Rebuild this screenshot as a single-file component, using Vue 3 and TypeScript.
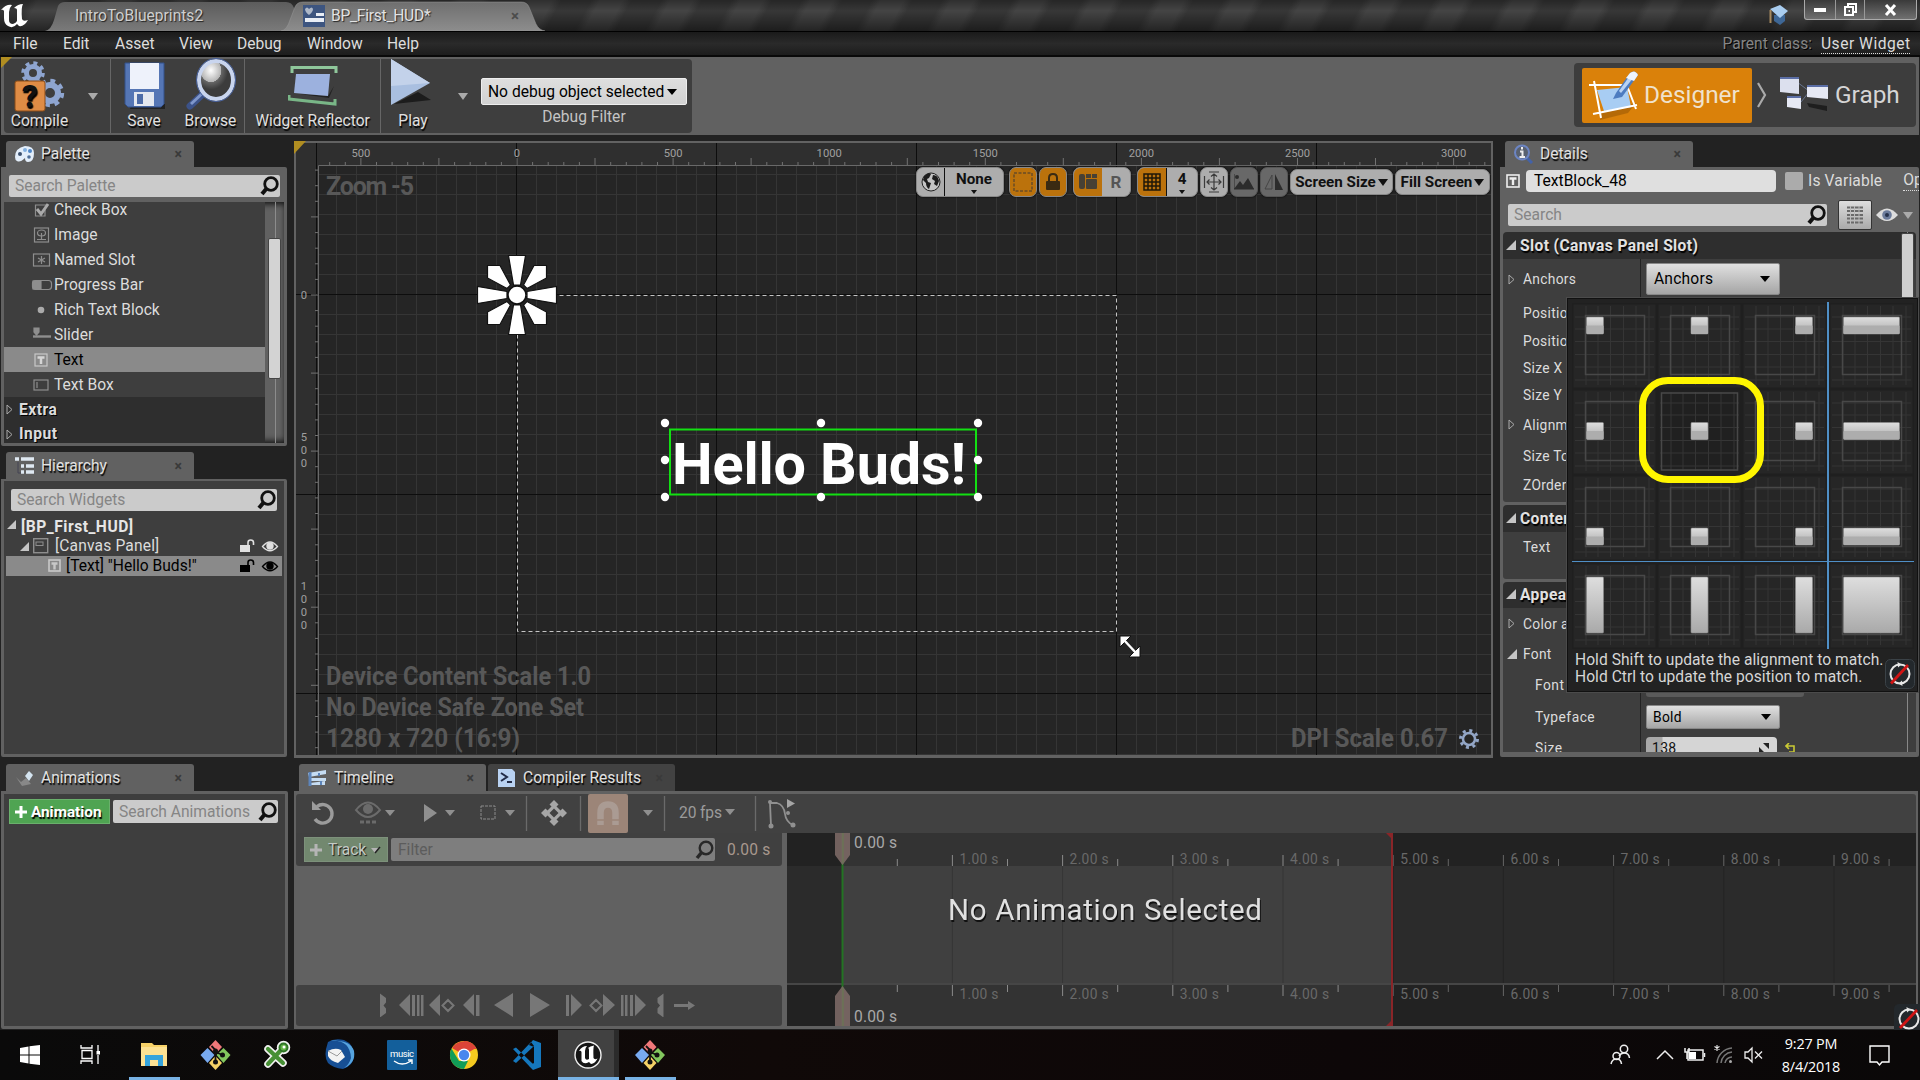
<script setup lang="ts">
interface PaletteItem { name: string; icon: string; selected?: boolean }
interface Tick { pos: number; len: number; label?: string }

const menus = [
  { name: 'File', w: 50 }, { name: 'Edit', w: 52 }, { name: 'Asset', w: 64 }, { name: 'View', w: 58 },
  { name: 'Debug', w: 70 }, { name: 'Window', w: 80 }, { name: 'Help', w: 60 },
]

const palette: PaletteItem[] = [
  { name: 'Check Box', icon: 'check' },
  { name: 'Image', icon: 'image' },
  { name: 'Named Slot', icon: 'slot' },
  { name: 'Progress Bar', icon: 'progress' },
  { name: 'Rich Text Block', icon: 'dot' },
  { name: 'Slider', icon: 'slider' },
  { name: 'Text', icon: 'text', selected: true },
  { name: 'Text Box', icon: 'textbox' },
]

const ruler = (from: number, to: number, origin: number): Tick[] => {
  const out: Tick[] = []
  for (let i = -30; i < 70; i++) {
    const pos = origin + i * 15.61
    if (pos < from || pos > to) continue
    const major = i % 10 === 0
    out.push({ pos, len: major ? 7 : i % 5 === 0 ? 7 : 3, label: major ? String(Math.abs(i * 50)) : undefined })
  }
  return out
}
const hTicks = ruler(320, 1491, 517)
const vTicks = ruler(168, 754, 295)

const gridX: number[] = []
for (let x = 337; x < 1492; x += 20) if ((x - 517) % 200 !== 0) gridX.push(x)
const gridY: number[] = []
for (let y = 174; y < 755; y += 20) if ((y - 294) % 200 !== 0) gridY.push(y)
const majorX = [317, 517, 717, 917, 1117, 1317]
const majorY = [294, 494, 693]

const handles = [
  [665, 423], [821, 423], [978, 423], [665, 460], [978, 460], [665, 497], [821, 497], [978, 497],
]
const petals = [0, 90, 180, 270]

const seconds = [1, 2, 3, 4, 5, 6, 7, 8, 9]
const halves = [0, 1, 2, 3, 4, 5, 6, 7, 8, 9]
const timeX = (s: number) => 55.2 + s * 110.2

interface Anchor { row: number; col: number; x: number; y: number; w: number; h: number; hover: boolean }
const starts = [14.5, 34, 53.5, 14.5]
const anchors: Anchor[] = []
for (let row = 0; row < 4; row++)
  for (let col = 0; col < 4; col++)
    anchors.push({
      row, col, x: starts[col], y: starts[row] - 0.5,
      w: col === 3 ? 56 : 17, h: row === 3 ? 56 : 17,
      hover: row === 1 && col === 1,
    })
const cellLines = [14, 26, 38.5, 51.5, 64, 77]

const props = [
  { label: 'Position X', h: 28 }, { label: 'Position Y', h: 27 }, { label: 'Size X', h: 28 },
  { label: 'Size Y', h: 26 }, { label: 'Alignment', h: 33, arrow: true }, { label: 'Size To Content', h: 29 },
  { label: 'ZOrder', h: 30 },
]
</script>

<template>
  <div class="screen">
    <header class="titlebar">
      <svg class="tabs" width="560" height="31" viewBox="0 0 560 31">
        <defs>
          <linearGradient id="t1" x2="0" y2="1"><stop offset="0" stop-color="#5c5c5c" /><stop offset="1" stop-color="#7a7a7a" /></linearGradient>
          <linearGradient id="t2" x2="0" y2="1"><stop offset="0" stop-color="#6f6f6f" /><stop offset="1" stop-color="#8d8d8d" /></linearGradient>
        </defs>
        <path d="M45 31Q51 30 54 20L58 6Q60 2 65 2H286Q292 2 294 8L300 31Z" fill="url(#t1)" />
        <path d="M281 31Q287 30 290 20L295 7Q297 2 303 2H521Q527 2 529 7L536 24Q539 30 545 31Z" fill="url(#t2)" stroke="#999" stroke-width=".5" />
        <g fill="#fff">
          <path d="M1 10Q6 4 12 5Q9 8 9 12V20Q9 24 13 24Q16 23 17 21V10Q17 8 14 8Q18 4 23 4Q21 7 22 19Q23 22 28 20Q24 27 19 26L17 24Q13 29 8 26Q4 24 4 18V11Q3 9 1 10Z" />
        </g>
        <rect x="303" y="5" width="22" height="22" fill="#3d5580" />
        <path d="M305 9q2-3 4 0q3-3 4 0q0 3-4 6q-4-3-4-6" fill="#aeb8c8" />
        <path d="M316 13h8v3h-8zM305 18h19v4h-19z" fill="#e8edf5" />
      </svg>
      <span class="tab-text one">IntroToBlueprints2</span>
      <span class="tab-text two">BP_First_HUD*</span>
      <span class="title-x">×</span>
      <div class="grow"></div>
      <svg class="cap" width="22" height="22" viewBox="0 0 22 22">
        <path d="M6 11v6l6 4 5-4v-6z" fill="#3e6796" /><path d="M2 5l10-4 8 6-8 7z" fill="#a9cdf0" /><path d="M2.500 6v13" stroke="#a68a60" stroke-width="2" />
      </svg>
      <div class="winbtns">
        <span class="wb w1"><svg width="14" height="5"><rect x="1" y="1" width="12" height="4" fill="#fff" /></svg></span>
        <span class="wb w2"><svg width="14" height="14" fill="none" stroke="#fff" stroke-width="2"><path d="M5 3V1h8v8h-2" /><rect x="2" y="4" width="8" height="8" /><path d="M5.500 8h1.500" /></svg></span>
        <span class="wb w3"><svg width="14" height="14" stroke="#fff" stroke-width="3"><path d="M2 2l9 10M11 2L2 12" /></svg></span>
      </div>
    </header>

    <nav class="menubar">
      <span v-for="m in menus" :key="m.name" class="menu" :style="{ width: m.w + 'px' }">{{ m.name }}</span>
      <div class="grow"></div>
      <span class="parent">Parent class:</span><span class="userwidget">User Widget</span>
    </nav>

    <section class="toolbar">
      <i class="corner"></i>
      <div class="tools">
        <div class="tool compile">
          <svg class="open" width="54" height="52" viewBox="0 0 54 52">
            <g fill="none" stroke="#8ea5d0"><circle cx="20" cy="14" r="6.500" stroke-width="5" /><circle cx="20" cy="14" r="9.800" stroke-width="4" stroke-dasharray="3.850 3.850" /><circle cx="37" cy="34" r="8" stroke-width="6" /><circle cx="37" cy="34" r="12.200" stroke-width="4" stroke-dasharray="4.790 4.790" /></g>
            <rect x="2" y="22" width="30" height="30" rx="2" fill="#df8c45" stroke="#8a4b16" />
            <text x="17" y="48" font-size="31" font-weight="900" text-anchor="middle" fill="#111">?</text>
          </svg>
          <span>Compile</span>
        </div>
        <i class="caret c1"></i>
        <div class="tool save">
          <svg width="44" height="50" viewBox="0 0 44 50">
            <path d="M10 45h33v5H8z" fill="#222" />
            <path d="M3 4H42V45L39 48H6L3 45Z" fill="#5576b5" stroke="#33508a" /><rect x="8" y="4" width="29" height="26" fill="#eef2fb" /><rect x="12" y="33" width="20" height="14" fill="#e4e8f0" /><rect x="15" y="35" width="6" height="10" fill="#4d6ca8" />
          </svg>
          <span>Save</span>
        </div>
        <div class="tool browse">
          <svg width="52" height="52" viewBox="0 0 52 52">
            <defs><radialGradient id="lens" cx=".35" cy=".25"><stop offset="0" stop-color="#fff" /><stop offset=".6" stop-color="#b5b5b5" /><stop offset=".62" stop-color="#666" /><stop offset="1" stop-color="#3c3c3c" /></radialGradient></defs>
            <path d="M20 34L5 48" stroke="#3c5288" stroke-width="7" stroke-linecap="round" /><path d="M20 33L6 46" stroke="#7f97cb" stroke-width="3" />
            <ellipse cx="31" cy="22" rx="17" ry="19" fill="url(#lens)" stroke="#c9d5ee" stroke-width="4" /><ellipse cx="31" cy="22" rx="19.500" ry="21.500" fill="none" stroke="#4a64a0" />
          </svg>
          <span>Browse</span>
        </div>
        <div class="tool reflector">
          <svg width="50" height="42" viewBox="0 0 50 42">
            <path d="M4 8V2.500H48V8" fill="none" stroke="#8fc79b" stroke-width="3" /><path d="M1 30V34L47 39V34" fill="none" stroke="#79b687" stroke-width="3" /><path d="M12 29l28 2 6-10-5 12z" fill="#222" /><path d="M8 9H42L40 31 6 28Z" fill="#9cb1de" />
          </svg>
          <span>Widget Reflector</span>
        </div>
        <div class="tool play">
          <svg width="44" height="50" viewBox="0 0 44 50"><path d="M6 46L43 42 30 34z" fill="#1c1c1c" /><path d="M3 1L42 25 3 47Z" fill="#a9bfe0" /><path d="M3 1L42 25 3 28Z" fill="#c3d2ea" /></svg>
          <span>Play</span>
        </div>
        <i class="caret c2"></i>
        <div class="debug">
          <div class="debugbox"><span>No debug object selected</span><i class="bcaret"></i></div>
          <span class="debuglabel">Debug Filter</span>
        </div>
      </div>
      <div class="grow"></div>
      <div class="modes">
        <div class="designer">
          <svg width="52" height="52" viewBox="0 0 52 52">
            <path d="M12 44l36-10-8 10-28 7z" fill="#9b5a05" opacity=".6" /><path d="M9 21L39 18 43 38 16 42Z" fill="#a8cdf3" /><path d="M1 16H40M6 12L13 49M5 45L49 36M38 14L48 40" stroke="#fff" stroke-width="2" fill="none" /><path d="M28 24L42 4Q47 0 50 6L34 28 25 30Z" fill="#4d7cc0" /><path d="M31 22L43 5 46 8 33 24z" fill="#b9d3f3" /><path d="M42 4Q47 0 50 6L46 12 38 9Z" fill="#eef4ff" />
          </svg>
          <span>Designer</span>
        </div>
        <svg class="chev" width="12" height="26"><path d="M2 1L9 13 2 25" fill="none" stroke="#aaa" stroke-width="2.200" /></svg>
        <svg width="50" height="36" viewBox="0 0 50 36">
          <path d="M18 5L30 14M22 25L30 15" stroke="#67748f" /><path d="M4 17l10 8M28 26l20 3v5l-18-4z" fill="#1e1e1e" />
          <path d="M1 0H20V17L1 15Z" fill="#dce0ee" /><path d="M28 8H49V22L28 20Z" fill="#e6e9f4" /><path d="M8 19H22V32L8 30Z" fill="#e6e9f4" />
          <path d="M1 0H20V2H1zM28 8H49V10H28zM8 19H22V21H8z" fill="#5b6ea6" />
        </svg>
        <span class="graph">Graph</span>
      </div>
    </section>

    <main class="main">
      <aside class="left">
        <div class="tab">
          <svg width="21" height="18" viewBox="0 0 21 18"><path d="M1 12Q1 3 11 1Q20 1 20 8Q20 17 14 17Q11 17 11 13Q6 18 3 16Q1 15 1 12Z" fill="#e3eefa" /><circle cx="6" cy="9" r="2" fill="#3b506e" /><circle cx="11" cy="5" r="2" fill="#85b1e0" /><circle cx="16" cy="6" r="2" fill="#4f86c6" /><circle cx="15" cy="12" r="1.800" fill="#4f6e98" /></svg>
          <span>Palette</span><b class="x">×</b>
        </div>
        <div class="panel palette">
          <div class="search"><span>Search Palette</span><svg class="mag" width="19" height="20" viewBox="0 0 19 20"><circle cx="11" cy="8" r="6.300" fill="none" stroke="#111" stroke-width="2.800" /><path d="M7 12L2 18" stroke="#111" stroke-width="4" /></svg></div>
          <div class="plist">
            <div class="rows">
              <div v-for="p in palette" :key="p.name" class="prow" :class="{ sel: p.selected }">
                <svg width="22" height="18" viewBox="0 0 22 18" fill="none" stroke="#8e8e8e" stroke-width="1.200">
                  <template v-if="p.icon === 'check'"><path d="M15 4H4.500V15H14V9" /><path d="M6 8l4 5 7-10" stroke-width="3" stroke="#aaa" /></template>
                  <template v-else-if="p.icon === 'image'"><rect x="3.500" y="2" width="14" height="14" /><ellipse cx="10.500" cy="7" rx="4" ry="3" /><path d="M10.500 7v6M6 13.500h9" /></template>
                  <template v-else-if="p.icon === 'slot'"><rect x="2.500" y="3" width="16" height="12" /><path d="M10.500 5v8M7 7l7 4M14 7l-7 4" /></template>
                  <template v-else-if="p.icon === 'progress'"><rect x="1.500" y="4.500" width="19" height="9" rx="3" /><rect x="2" y="5" width="8" height="8" fill="#8e8e8e" /></template>
                  <circle v-else-if="p.icon === 'dot'" cx="10" cy="9" r="3.300" fill="#aaa" stroke="none" />
                  <template v-else-if="p.icon === 'slider'"><path d="M2 10.500H20" stroke-width="2.400" /><path d="M3 2H8V6L5.500 9 3 6Z" fill="#8e8e8e" /></template>
                  <template v-else-if="p.icon === 'text'"><rect x="4" y="3" width="12" height="12" stroke="#c8c8c8" /><path d="M6.500 6.500h7M10 6v7" stroke="#d5d5d5" stroke-width="2.500" /></template>
                  <template v-else><rect x="3" y="4" width="14" height="10" /><path d="M6 6v6" /></template>
                </svg>
                <span>{{ p.name }}</span>
              </div>
              <div class="pcat"><svg width="8" height="11"><path d="M1 1V10L6 5.500Z" fill="none" stroke="#aaa" /></svg>Extra</div>
              <div class="pcat"><svg width="8" height="11"><path d="M1 1V10L6 5.500Z" fill="none" stroke="#aaa" /></svg>Input</div>
            </div>
            <div class="track"><i></i></div>
          </div>
        </div>
        <div class="tab h">
          <svg width="21" height="18" viewBox="0 0 21 18"><path d="M1 2h4M7 2h13M7 9h3M12 9h8M7 15h3M12 15h8" stroke="#dfe9f2" stroke-width="3.500" /><path d="M4 5v11h3" stroke="#445" fill="none" /></svg>
          <span>Hierarchy</span><b class="x">×</b>
        </div>
        <div class="panel hier">
          <div class="search"><span>Search Widgets</span><svg class="mag" width="19" height="20" viewBox="0 0 19 20"><circle cx="11" cy="8" r="6.300" fill="none" stroke="#111" stroke-width="2.800" /><path d="M7 12L2 18" stroke="#111" stroke-width="4" /></svg></div>
          <div class="hrow root"><i class="exp"></i><b>[BP_First_HUD]</b></div>
          <div class="hrow canvas"><i class="exp"></i>
            <svg class="hi" width="16" height="16" fill="none" stroke="#8e8e8e"><rect x=".7" y=".7" width="14" height="14" stroke-width="1.400" /><rect x="3" y="4" width="7" height="3.500" /></svg>
            <span>[Canvas Panel]</span>
            <div class="grow"></div>
            <svg width="40" height="14" viewBox="0 0 40 14" fill="#e0e0e0"><rect x="1" y="6" width="10" height="7" /><path d="M9 6V3.500Q9 1 11.700 1T14.500 3.500V6" fill="none" stroke="#e0e0e0" stroke-width="1.600" /><path d="M23.500 7.500Q31-1.500 38.500 7.500Q31 16 23.500 7.500Z" fill="none" stroke="#e0e0e0" stroke-width="1.300" /><circle cx="31" cy="7" r="3.700" /></svg>
          </div>
          <div class="hrow txt">
            <svg class="hi" width="14" height="14" fill="none" stroke="#c8c8c8"><rect x="1" y="1" width="11" height="11" stroke-width="1.600" /><path d="M3.500 4.500h6M6.500 4v6.500" stroke-width="2.400" /></svg>
            <span>[Text] "Hello Buds!"</span>
            <div class="grow"></div>
            <svg width="40" height="14" viewBox="0 0 40 14" fill="#000"><rect x="1" y="6" width="10" height="7" /><path d="M9 6V3.500Q9 1 11.700 1T14.500 3.500V6" fill="none" stroke="#000" stroke-width="1.600" /><path d="M23.500 7.500Q31-1.500 38.500 7.500Q31 16 23.500 7.500Z" fill="none" stroke="#000" stroke-width="1.300" /><circle cx="31" cy="7" r="3.700" /></svg>
          </div>
        </div>
      </aside>

      <section class="viewport">
        <svg width="1199" height="617" viewBox="294 141 1199 617">
          <rect x="294" y="141" width="1199" height="617" fill="#626262" />
          <rect x="296" y="143" width="1195" height="612" fill="#2f2f2f" />
          <rect x="318.500" y="165" width="1172.500" height="590" fill="#252525" />
          <g stroke="#353535"><path v-for="x in gridX" :key="x" :d="`M${x - 0.5} 166V755`" /><path v-for="y in gridY" :key="y" :d="`M319 ${y + 0.5}H1491`" /></g>
          <g stroke="#0d0d0d"><path v-for="x in majorX" :key="x" :d="`M${x - 0.5} 143V755`" /><path v-for="y in majorY" :key="y" :d="`M296 ${y + 0.5}H1491`" /></g>
          <path d="M318.500 755V165.500H1491" fill="none" stroke="#696969" />
          <g stroke="#727272">
            <path v-for="t in hTicks" :key="t.pos" :d="`M${t.pos.toFixed(1)} 165v${-t.len}`" />
            <path v-for="t in vTicks" :key="t.pos" :d="`M318 ${t.pos.toFixed(1)}h${-t.len}`" />
          </g>
          <g class="rl">
            <template v-for="t in hTicks" :key="t.pos"><text v-if="t.label" :x="t.pos" y="157">{{ t.label }}</text></template>
            <text x="304" y="299">0</text>
            <text x="304" y="441">5</text><text x="304" y="454">0</text><text x="304" y="467">0</text>
            <text x="304" y="590">1</text><text x="304" y="603">0</text><text x="304" y="616">0</text><text x="304" y="629">0</text>
          </g>
          <path d="M294 141h12L294 154z" fill="#b08d21" />
          <g class="info">
            <text x="326" y="194.500" textLength="88">Zoom -5</text>
            <text x="326" y="685" textLength="265" lengthAdjust="spacingAndGlyphs">Device Content Scale 1.0</text>
            <text x="326" y="716" textLength="258" lengthAdjust="spacingAndGlyphs">No Device Safe Zone Set</text>
            <text x="326" y="747" textLength="194" lengthAdjust="spacingAndGlyphs">1280 x 720 (16:9)</text>
            <text x="1291" y="747" textLength="157" lengthAdjust="spacingAndGlyphs">DPI Scale 0.67</text>
          </g>
          <path d="M517.500 295.500H1116.500V631.500H517.500Z" fill="none" stroke="#c4c4c4" stroke-dasharray="4 3" />
          <g transform="translate(517 295)" fill="#fff" stroke="#111" stroke-width="1.200">
            <g v-for="r in petals" :key="r" :transform="`rotate(${r})`">
              <path d="M-3.500-10L-8.500-39.500H8.500L3.500-10Z" /><path d="M6.500-10L17-29.500H29.500V-17L10-6.500Z" />
            </g>
            <circle r="9" stroke-width="1.500" />
          </g>
          <rect x="670" y="429.500" width="306" height="65" fill="none" stroke="#12e012" stroke-width="2" />
          <text class="hello" x="672" y="484" textLength="294">Hello Buds!</text>
          <circle v-for="(h, i) in handles" :key="i" :cx="h[0]" :cy="h[1]" r="4.200" fill="#fff" />
          <path d="M1120 636H1131L1120 647ZM1140 657H1129L1140 646Z" fill="#fff" stroke="#111" /><path d="M1123 639L1137 654" stroke="#fff" stroke-width="2.500" />
          <g transform="translate(1469 739)" fill="none" stroke="#93a6c6"><circle r="6" stroke-width="2.500" /><circle r="8.500" stroke-width="3" stroke-dasharray="3 3.680" /></g>
        </svg>

        <div class="vtools">
          <div class="vb pair">
            <span class="cell globe"><svg width="20" height="20" viewBox="0 0 20 20"><circle cx="10" cy="10" r="9" fill="#c4c4c4" stroke="#222" /><path d="M3 4q5-4 7-2l-2 4-2 1 1 3 3 1-2 6q-3-2-3-6L2 8zM12 3q5 0 6 6l-2 5-3-2 1-3-3-2z" fill="#1c1c1c" /></svg></span>
            <span class="cell none"><b>None</b><i></i></span>
          </div>
          <div class="vb on dash"><svg width="22" height="22"><rect x="2" y="2" width="18" height="18" fill="none" stroke="#7d551f" stroke-width="2" stroke-dasharray="3 1.500" /></svg></div>
          <div class="vb on lock"><svg width="16" height="20"><rect x="1" y="9" width="14" height="9" rx="1" fill="#3a2a12" /><path d="M4 10V6Q4 2 8 2T12 6V10" fill="none" stroke="#3a2a12" stroke-width="2" /></svg></div>
          <div class="vb pair flow">
            <span class="cell on"><svg width="18" height="18" fill="#474034"><rect x="0" y="1" width="6" height="15" rx="2" /><rect x="7" y="1" width="5" height="4" /><rect x="13" y="1" width="5" height="4" /><rect x="7" y="6" width="11" height="10" rx="1" /></svg></span>
            <span class="cell rr"><b>R</b></span>
          </div>
          <div class="vb pair gridb">
            <span class="cell on"><svg width="18" height="18" fill="none" stroke="#201808" stroke-width="1.500"><path d="M1 1H17V17H1ZM5 1V17M9 1V17M13 1V17M1 5H17M1 9H17M1 13H17" /></svg></span>
            <span class="cell none"><b>4</b><i></i></span>
          </div>
          <div class="vb"><svg width="22" height="22" fill="none" stroke="#3a3a3a" stroke-width="1.200"><path d="M6 1H16M6 21H16M1.500 5V17M20.500 5V17M4 11H18M11 3V19M8 5.500L11 3 14 5.500M8 16.500L11 19 14 16.500M6.500 8.500L4 11 6.500 13.500M15.500 8.500L18 11 15.500 13.500" /></svg></div>
          <div class="vb dim"><svg width="20" height="16" fill="#2c2c2c"><path d="M0 15L6 7 9 11 14 4 20 15Z" /><circle cx="3" cy="3" r="2" /><path d="M0 0V15H20" fill="none" stroke="#2c2c2c" /></svg></div>
          <div class="vb dim"><svg width="20" height="18"><path d="M8 2V16H1Z" fill="none" stroke="#444" /><path d="M11 1V17H19Z" fill="#2c2c2c" /></svg></div>
          <div class="vb wide w1"><b>Screen Size</b><i></i></div>
          <div class="vb wide w2"><b>Fill Screen</b><i></i></div>
        </div>
      </section>

      <aside class="right">
        <div class="tab">
          <svg width="21" height="20" viewBox="0 0 21 20"><path d="M13 13L19 19" stroke="#4362a8" stroke-width="3" /><circle cx="9" cy="8.500" r="7" fill="#59616f" stroke="#6c85c4" stroke-width="2" /><path d="M9 3v2.500M7 7.500h2.500V13M6.500 13h5.500" stroke="#eee" stroke-width="2" fill="none" /></svg>
          <span>Details</span><b class="x">×</b>
        </div>
        <div class="panel details">
          <div class="drow name">
            <svg width="14" height="14" fill="none" stroke="#eee"><rect x="1" y="1" width="12" height="12" stroke-width="1.600" /><path d="M3.500 4.500h7M7 4v7" stroke-width="2.400" /></svg>
            <div class="nameinput">TextBlock_48</div>
            <i class="check"></i><span class="isvar">Is Variable</span><span class="op">Op</span>
          </div>
          <div class="drow srch">
            <div class="search"><span>Search</span><svg class="mag" width="19" height="20" viewBox="0 0 19 20"><circle cx="11" cy="8" r="6.300" fill="none" stroke="#111" stroke-width="2.800" /><path d="M7 12L2 18" stroke="#111" stroke-width="4" /></svg></div>
            <div class="listbtn"><svg width="18" height="18" stroke="#6a6a6a" stroke-width="2"><path d="M1 1.500h3M5 1.500h12M1 5h3M5 5h12M1 9h3M5 9h12M1 12.500h3M5 12.500h12M1 16.500h3M5 16.500h12" /><path d="M4.500 0V18M8.500 0V18M13 0V18" stroke="#bbb" stroke-width="1" /></svg></div>
            <svg class="eye" width="22" height="14" viewBox="0 0 22 14"><path d="M0 7Q11-6 22 7Q11 19 0 7Z" fill="#ddd" /><circle cx="11" cy="7" r="4.800" fill="#6c7c9c" /><circle cx="11" cy="7" r="2" fill="#26324c" /></svg>
            <i class="caret"></i>
          </div>
          <div class="dbody">
            <div class="dhead"><i class="exp"></i>Slot (Canvas Panel Slot)</div>
            <div class="dprops slot">
              <div class="dp anch"><span class="arr"><svg width="8" height="11"><path d="M1 1V10L6 5.500Z" fill="none" stroke="#aaa" /></svg></span><label>Anchors</label><div class="combo big"><span>Anchors</span><i class="bcaret"></i></div></div>
              <div v-for="p in props" :key="p.label" class="dp" :style="{ height: p.h + 'px' }"><span class="arr"><svg v-if="p.arrow" width="8" height="11"><path d="M1 1V10L6 5.500Z" fill="none" stroke="#aaa" /></svg></span><label>{{ p.label }}</label></div>
            </div>
            <div class="dhead gap b"><i class="exp"></i>Content</div>
            <div class="dprops"><div class="dp content"><span class="arr"></span><label>Text</label></div></div>
            <div class="dhead gap a"><i class="exp"></i>Appearance</div>
            <div class="dprops last">
              <div class="dp r31"><span class="arr"><svg width="8" height="11"><path d="M1 1V10L6 5.500Z" fill="none" stroke="#aaa" /></svg></span><label>Color and Opacity</label></div>
              <div class="dp r30"><span class="arr"><i class="exp"></i></span><label>Font</label></div>
              <div class="dp r32 sub"><span class="arr"></span><label>Font</label><div class="famcombo"></div></div>
              <div class="dp r32 sub"><span class="arr"></span><label>Typeface</label><div class="combo"><span>Bold</span><i class="bcaret"></i></div></div>
              <div class="dp r29 sub"><span class="arr"></span><label>Size</label><div class="num"><span>138</span><svg width="12" height="12" fill="#222"><path d="M5 1h6v6zM1 5v6h6z" /></svg></div><svg class="reset" width="10" height="10" fill="none" stroke="#c9c934" stroke-width="1.600"><path d="M1 3H9V9H4M4 0L1 3 4 6" /></svg></div>
            </div>
            <div class="dscroll"><i></i></div>
          </div>
        </div>

        <div class="popup">
          <div class="agrid">
            <svg v-for="a in anchors" :key="`${a.row}-${a.col}`" width="85" height="86" viewBox="0 0 85 86">
              <rect width="85" height="86" fill="#1f1f1f" /><rect x="1.500" y="1.500" width="82" height="83" :fill="a.hover ? '#202020' : '#262626'" />
              <g stroke="#353535" stroke-width="1"><template v-for="l in cellLines" :key="l"><path :d="`M${l} 3V82M3 ${l}H82`" /></template></g>
              <rect v-if="a.hover" x="4.500" y="4" width="76" height="77" fill="none" stroke="#484848" stroke-width="1.500" />
              <rect v-else x="13.500" y="12.500" width="59" height="59" fill="none" stroke="#484848" stroke-width="1.500" />
              <rect :x="a.x" :y="a.y" :width="a.w" :height="a.h" rx="1" fill="url(#silver)" stroke="#8c8c8c" stroke-width=".6" />
              <rect v-if="a.h < 20" :x="a.x" :y="a.y + a.h / 2" :width="a.w" :height="a.h / 2" rx="1" fill="#adadad" />
            </svg>
          </div>
          <i class="vline"></i><i class="hline"></i><i class="yellow"></i>
          <p>Hold Shift to update the alignment to match.<br>Hold Ctrl to update the position to match.</p>
          <svg class="nosync" width="30" height="30" viewBox="0 0 30 30"><rect x=".5" y=".5" width="29" height="29" rx="5" fill="#23282c" stroke="#3b4247" /><circle cx="15" cy="15" r="9.500" fill="none" stroke="#e8e8e8" stroke-width="2" /><path d="M12.500 3l4 2.500-3.500 3zM17.500 27l-4-2.500 3.500-3z" fill="#e8e8e8" /><path d="M6 24.500L23 6" stroke="#d01414" stroke-width="2.800" /></svg>
        </div>
      </aside>
    </main>

    <section class="bottom">
      <aside class="anim">
        <div class="tab">
          <svg width="21" height="18" viewBox="0 0 21 18"><path d="M2 8L7 13 12 9 17 15 8 17Z" fill="#888" /><path d="M11 7L15 2 19 6 15 12Z" fill="#d4e4f0" /></svg>
          <span>Animations</span><b class="x">×</b>
        </div>
        <div class="panel apanel">
          <div class="green"><svg width="14" height="14"><path d="M7 1V13M1 7H13" stroke="#fff" stroke-width="3" /></svg>Animation</div>
          <div class="search"><span>Search Animations</span><svg class="mag" width="19" height="20" viewBox="0 0 19 20"><circle cx="11" cy="8" r="6.300" fill="none" stroke="#111" stroke-width="2.800" /><path d="M7 12L2 18" stroke="#111" stroke-width="4" /></svg></div>
        </div>
      </aside>

      <section class="timeline">
        <div class="ttabs">
          <div class="tab"><svg width="21" height="18" viewBox="0 0 21 18"><path d="M1 4L19 1V5L2 8ZM2 9H19V12H3ZM3 14L18 12V16H4Z" fill="#c5dcf2" /><path d="M3 3V17" stroke="#5d85bb" stroke-width="3" /><path d="M12 4V7M14 12V16" stroke="#5d85bb" stroke-width="2" /></svg><span>Timeline</span><b class="x">×</b></div>
          <div class="tab off"><svg width="21" height="20" viewBox="0 0 21 20"><path d="M2 1H16L19 4V19H2Z" fill="#b9d2f2" /><path d="M5 5L11 9 5 13M11 14H16" stroke="#222c48" stroke-width="2" fill="none" /></svg><span>Compiler Results</span><b class="x">×</b></div>
        </div>
        <div class="tpanel">
          <div class="ttools">
            <svg width="510" height="39" viewBox="296 794 510 39">
              <g fill="none" stroke="#8c8c8c">
                <path d="M317 806.500A9.300 9.300 0 1 1 315 819" stroke="#9b9b9b" stroke-width="3.400" /><path d="M312 801v9h9z" fill="#9b9b9b" stroke="none" />
                <path d="M356 810Q368 795 380 810Q368 824 356 810Z" stroke="#6b6b6b" stroke-width="2" /><circle cx="368" cy="809" r="5" fill="#6b6b6b" stroke="none" /><path d="M360 822h4M366 822h4M372 822h4" stroke="#6b6b6b" stroke-width="3" />
                <rect x="481" y="806" width="14" height="13" stroke-dasharray="3 1" />
              </g>
              <g fill="#8f8f8f"><path d="M385 810h10l-5 6zM445 810h10l-5 6zM505 810h10l-5 6zM643 810h10l-5 6zM725 809h10l-5 6zM424 804v18l13-9z" /></g>
              <path d="M554 800L567 813 554 826 541 813Z" fill="#a6a6a6" /><path d="M554 808.500L558.500 813 554 817.500 549.500 813ZM547.500 802.500L551.500 806.500 547.500 810.500 543.500 806.500ZM560.500 802.500L564.500 806.500 560.500 810.500 556.500 806.500ZM547.500 815.500L551.500 819.500 547.500 823.500 543.500 819.500ZM560.500 815.500L564.500 819.500 560.500 823.500 556.500 819.500Z" fill="#414141" />
              <path d="M526.500 796V831M580.500 796V831M664.500 796V831M755.500 796V831" stroke="#6a6a6a" stroke-width="1.300" />
              <rect x="588" y="794" width="40" height="39" rx="2" fill="#9c8578" />
              <path d="M600.500 825V813Q600.500 804.500 608 804.500T615.500 813V825" fill="none" stroke="#aa9b93" stroke-width="6.500" /><path d="M596 820h8M612 820h8" stroke="#9c8578" stroke-width="1.500" />
              <text x="679" y="818" textLength="43" font-size="15.600" fill="#9b9b9b">20 fps</text>
              <path d="M771 826L770 803 777 803Q784 805 785 814Q786 822 793 825" fill="none" stroke="#909090" stroke-width="1.800" /><path d="M787 799v9l8-4.500z" fill="#a5a5a5" /><g fill="#909090"><circle cx="771" cy="826" r="2.500" /><circle cx="770" cy="802" r="2" /><circle cx="788" cy="813" r="2" /><circle cx="793" cy="825" r="2.500" /></g>
            </svg>
          </div>
          <div class="tbody">
            <div class="tleft">
              <div class="trow">
                <div class="trackbtn"><svg width="14" height="14"><path d="M7 1V13M1 7H13" stroke="#b5b5b5" stroke-width="3" /></svg><span>Track</span><svg width="10" height="8"><path d="M0 2H9L4 7Z" fill="#b5b5b5" /><path d="M4 7L9 1" stroke="#222" stroke-width="1.500" /></svg></div>
                <div class="filter"><span>Filter</span><svg class="mag" width="19" height="20" viewBox="0 0 19 20"><circle cx="11" cy="8" r="6.300" fill="none" stroke="#282828" stroke-width="2.400" /><path d="M7 12L2 18" stroke="#282828" stroke-width="3.500" /></svg></div>
                <span class="tzero">0.00 s</span>
              </div>
              <div class="tempty"></div>
              <div class="transport">
                <svg width="330" height="24" viewBox="372 993 330 24" fill="#777">
                  <path d="M380 993.500L386 998V1002.500L383.500 1005.500 386 1008.500V1013L380 1017.500ZM399 1005l11-11v22zM412 995h3v21h-3zM417 995h2.500v21h-2.500zM421 995h2.500v21h-2.500zM429 1005l11-11v22zM463 1005l11-11v22zM476 995h3.500v21h-3.500zM494 1005l19-12v24zM530 993v24l20-12zM566 995h3v21h-3zM571 994v22l11-11zM603 994v22l12-11zM621 995h2.500v21H621zM625 995h2.500v21H625zM630 995h3v21h-3zM635 994v22l11-11zM663.500 993.500L657.500 998V1002.500L660 1005.500 657.500 1008.500V1013L663.500 1017.500Z" />
                  <path d="M448 1000l5.500 5.500-5.500 5.500-5.500-5.500zM596 1000l5.500 5.500-5.500 5.500-5.500-5.500z" fill="none" stroke="#777" stroke-width="2" />
                  <path d="M674 1005.500H690" stroke="#777" stroke-width="3" /><path d="M688 1001l7 4.500-7 4.500z" />
                </svg>
              </div>
            </div>
            <svg class="tgraph" width="1129" height="193" viewBox="0 0 1129 193">
              <rect width="1129" height="193" fill="#222" /><rect y="33" width="1129" height="117" fill="#2b2b2b" />
              <rect x="55" width="551" height="193" fill="#333" /><rect x="55" y="33" width="551" height="117" fill="#404040" />
              <g v-for="s in seconds" :key="s">
                <path :d="`M${timeX(s)} 33V150`" :stroke="s < 5 ? '#353535' : '#242424'" />
                <path :d="`M${timeX(s)} 22V33M${timeX(s)} 152V163`" :stroke="s < 5 ? '#8a8a8a' : '#656565'" />
                <text class="tt" :x="timeX(s) + 7" y="31" textLength="39">{{ s }}.00 s</text>
                <text class="tt" :x="timeX(s) + 7" y="166" textLength="39">{{ s }}.00 s</text>
              </g>
              <path v-for="h in halves" :key="h" :d="`M${timeX(h + 0.5)} 26V33M${timeX(h + 0.5)} 152V159`" :stroke="h < 5 ? '#8a8a8a' : '#656565'" />
              <path d="M0 151H1129" stroke="#464646" stroke-width="2" />
              <path d="M605 0V193" stroke="#8a2528" stroke-width="2" /><path d="M599 0h7v7zM599 193h7v-7z" fill="#8a2528" />
              <path d="M55.500 0V193" stroke="#237323" stroke-width="2" />
              <path d="M48 0H63V22L55.500 32 48 22ZM48 193H63V163L55.500 153 48 163Z" fill="#796764" opacity=".92" /><path d="M56 0V30M56 155V193" stroke="#667a50" />
              <text class="tw" x="67" y="15" textLength="43">0.00 s</text><text class="tw" x="67" y="189" textLength="43">0.00 s</text>
              <text class="noanim" x="161" y="87" textLength="314">No Animation Selected</text>
            </svg>
          </div>
        </div>
        <svg class="nosync2" width="26" height="26" viewBox="0 0 26 26"><rect width="34" height="34" rx="5" fill="#23282c" /><circle cx="15" cy="15" r="9.500" fill="none" stroke="#e8e8e8" stroke-width="2" /><path d="M12.500 3l4 2.500-3.500 3z" fill="#e8e8e8" /><path d="M6 24L23 6" stroke="#d01414" stroke-width="2.800" /></svg>
      </section>
    </section>

    <footer class="taskbar">
      <svg width="700" height="50" viewBox="0 0 700 50">
        <defs>
          <g id="git"><path d="M0-15L6.500-8 0-1-6.500-8Z" fill="#f0787a" /><path d="M-8-7L-1 0-8 8-15 0Z" fill="#78aaf0" /><path d="M8-7L15 0 8 8 1 0Z" fill="#82c75e" /><path d="M0 1L6.500 8 0 15-6.500 8Z" fill="#f5d266" /><path d="M-4-9L0-5V8M0-3L7 0" stroke="#111" stroke-width="1.800" fill="none" /><circle cx="0" cy="-4" r="2.500" fill="#111" /><circle cx="0" cy="7" r="2.500" fill="#111" /><circle cx="7" cy="0" r="2.500" fill="#111" /></g>
          <linearGradient id="silver" x2="0" y2="1"><stop offset="0" stop-color="#dedede" /><stop offset="1" stop-color="#a9a9a9" /></linearGradient>
        </defs>
        <rect x="558" width="56" height="50" fill="#414141" /><rect x="614" width="5" height="50" fill="#2b2b2b" />
        <path d="M129 47H180V50H129ZM558 47H619V50H558ZM625 47H676V50H625Z" fill="#78b2e4" />
        <path d="M20 18L28.500 16.500V24.500H20ZM29.500 16.300L40 15V24.500H29.500ZM20 25.500H28.500V33.500L20 32ZM29.500 25.500H40V35L29.500 33.700Z" fill="#fff" />
        <path d="M81 15V18H92V15M81 34V31H92V34M82 20.500H92V28.500H82ZM98 15V21M98 25V34" fill="none" stroke="#fff" stroke-width="1.300" /><rect x="96.500" y="21" width="3.500" height="3.500" fill="#fff" />
        <path d="M141 13H152L154 15H167V36H141Z" fill="#f7d268" /><path d="M141 17H167V36H141Z" fill="#fde293" /><path d="M145 36V25H163V36H158V30H150V36Z" fill="#35a4dc" />
        <use href="#git" x="215.500" y="25" />
        <g fill="none" stroke-linecap="round"><path d="M268 19L283 33M281 20L268 34" stroke="#f2f2f2" stroke-width="7.500" /><circle cx="283.500" cy="17.500" r="5" fill="#f2f2f2" stroke="#f2f2f2" stroke-width="3.500" /><path d="M268 19L283 33M281 20L268 34" stroke="#479035" stroke-width="4.200" /><circle cx="283.500" cy="17.500" r="4" fill="#63b346" stroke="#2f7527" stroke-width="2" /><circle cx="284" cy="17" r="1.500" fill="#fff" /></g>
        <path d="M328 12Q334 8 344 10Q354 14 354 26Q353 36 343 39Q333 38 328 33Q323 26 328 12Z" fill="#174f94" /><path d="M330 11Q350 9 351 28Q349 35 344 38Q356 33 354 21Q350 9 330 11Z" fill="#56a4df" /><path d="M328 21Q335 17 341 20L345 27 338 33Q330 31 328 26Z" fill="#f2f2f2" /><path d="M328 21L337 26 342 21" stroke="#999" fill="none" />
        <rect x="387" y="10" width="30" height="30" rx="1" fill="#135f9b" /><text x="402" y="27" text-anchor="middle" font-size="9.500" fill="#fff" textLength="24">music</text><path d="M394 31Q402 37 411 31M408 30h4v4" fill="none" stroke="#fff" stroke-width="1.400" />
        <circle cx="464" cy="25" r="14" fill="#f4c91f" /><path d="M464 25L452 18A14 14 0 0 1 476 18Z" fill="#db4437" /><path d="M464 11A14 14 0 0 1 476.500 19H464Z" fill="#db4437" /><path d="M464 39A14 14 0 0 1 451.500 18.500L459 31 468 31Z" fill="#119d58" /><circle cx="464" cy="25" r="6.500" fill="#fff" /><circle cx="464" cy="25" r="5.200" fill="#4a87ee" />
        <path d="M533 10L541 13V37L533 40 529 36 534 33V17L529 15ZM513 19L516 17.500 534 35 531 38ZM513 31L516 33 534 16 531 12Z" fill="#1577bd" />
        <circle cx="588" cy="25" r="13" fill="#151515" stroke="#eee" stroke-width="1.400" /><path d="M579 21Q582 16 587 16Q585 18 585 21V28Q586 31 589 29V20Q589 18 588 18Q590 16 594 15.500Q593 18 593.500 28Q594.500 30 597.500 28.500Q595 33.500 591 34L589 32Q584 35 581.500 31V22Q581 20 579 21Z" fill="#fff" />
        <use href="#git" x="650" y="25" />
      </svg>
      <div class="grow"></div>
      <svg width="160" height="50" viewBox="1606 1030 160 50" fill="none" stroke="#eee" stroke-width="1.500">
        <circle cx="1625" cy="1049" r="3.700" /><circle cx="1617.500" cy="1056" r="3.500" /><path d="M1612 1064q1-5 5.500-5t5 5M1620 1056q2-3 5-3 5 0 5.500 5" />
        <path d="M1658 1059L1666 1051 1674 1059" /><rect x="1689" y="1050" width="15" height="10" /><rect x="1690" y="1052" width="7" height="7" fill="#fff" stroke="none" /><path d="M1705.500 1053v4M1686 1048v4h4v-4M1688 1052v7" />
        <g stroke="#777"><path d="M1718 1063A16 16 0 0 1 1733 1048M1722 1063A12 12 0 0 1 1733 1052M1726 1063A7 7 0 0 1 1733 1057" /></g><path d="M1718 1045v6M1715.500 1046.500l5 3M1720.500 1046.500l-5 3" stroke-width="1.100" /><circle cx="1731.500" cy="1061.500" r="1.500" fill="#aaa" stroke="none" />
        <path d="M1746 1052h3l4-4v14l-4-4h-3zM1756 1051.500l7 7M1763 1051.500l-7 7" stroke-width="1.300" />
      </svg>
      <div class="clock"><span>9:27 PM</span><span>8/4/2018</span></div>
      <svg class="notif" width="22" height="22" fill="none" stroke="#fff" stroke-width="1.400"><path d="M1 1H20V17H13L10.500 20 8 17H1Z" /></svg>
    </footer>
  </div>
</template>

<style>
body { background: #222; overflow: hidden; }
</style>
<style scoped>
* { box-sizing: border-box; }
.screen { width: 1920px; height: 1080px; overflow: hidden; background: #222; display: flex; flex-direction: column; font: 15.6px/20px Roboto, "Liberation Sans", sans-serif; color: #dcdcdc; white-space: nowrap; }
svg { display: block; flex: none; }
svg text { font-family: Roboto, sans-serif; }
svg.open { overflow: visible; }
i { display: block; flex: none; }
.grow { flex: 1; }
.titlebar { height: 31px; display: flex; position: relative; background: linear-gradient(rgba(0,0,0,.35), rgba(0,0,0,.05) 35%, rgba(0,0,0,.5)), repeating-linear-gradient(118deg, #3a3a3a 0 26px, #484848 34px 54px, #3a3a3a 62px); }
.tab-text { position: absolute; top: 6px; text-shadow: 1px 1px 1px #222; color: #e2e2e2; }
.tab-text.one { left: 75px; color: #cfcfcf; }
.tab-text.two { left: 331px; letter-spacing: -.25px; }
.title-x { position: absolute; left: 511px; top: 6px; color: #4c4c4c; font-size: 15px; font-weight: 700; }
.cap { margin: 4px 14px 0 0; }
.winbtns { display: flex; height: 20px; margin-right: 3px; border: 1px solid #aaa; border-top: 0; border-radius: 0 0 3px 3px; background: linear-gradient(#3a3a3a, #707070); }
.wb { display: flex; align-items: center; justify-content: center; border-right: 1px solid #999; }
.wb:last-child { border: 0; }
.w1 { width: 31px; } .wb.w2 { width: 29px; } .w3 { width: 51px; }
.menubar { height: 26px; border-top: 1px solid #000; border-bottom: 2px solid #090909; background: linear-gradient(#1a1a1a, #2a2a2a 50%, #1d1d1d); display: flex; align-items: center; padding-left: 13px; }
.menu { color: #ddd; }
.parent { color: #858585; margin-right: 9px; text-shadow: 1px 1px #000; }
.userwidget { border-bottom: 1px dotted #ddd; line-height: 18px; margin: 1px 10px 0 0; width: 89px; letter-spacing: .5px; }
.toolbar { position: relative; height: 78px; flex: none; margin: 0 1px; background: #616161; display: flex; padding: 2px 3px; }
.corner { position: absolute; left: 0; top: 0; border-top: 11px solid #b08d21; border-right: 11px solid transparent; z-index: 2; }
.tools { width: 688px; height: 74px; background: #3e3e3e; border-radius: 4px; display: flex; position: relative; }
.tool { height: 74px; display: flex; flex-direction: column; align-items: center; justify-content: flex-end; padding-bottom: 2px; text-shadow: 1px 2px 1px #000; color: #e0e0e0; flex: none; }
.tool svg { margin-bottom: 1px; }
.compile { width: 71px; }
.compile svg { margin-bottom: 0; }
.caret { width: 0; height: 0; border: 5.500px solid transparent; border-top: 7px solid #aaa; border-bottom: 0; }
.c1 { margin: 34px 12px 0 13px; }
.save { width: 67px; border-left: 1px solid #666; }
.save svg { margin-bottom: 2px; }
.browse { width: 67px; }
.reflector { width: 136px; border-left: 1px solid #666; }
.reflector svg { margin-bottom: 4px; }
.play { width: 65px; border-left: 1px solid #666; }
.play svg { margin-bottom: 3px; margin-left: -6px; }
.c2 { margin: 34px 0 0 13px; }
.debug { margin: 19px 0 0 13px; width: 206px; display: flex; flex-direction: column; align-items: center; }
.debugbox { height: 27px; width: 206px; background: linear-gradient(#dedede, #d2d2d2); border: 1px solid #eee; border-radius: 2px; color: #000; display: flex; align-items: center; padding: 0 9px 0 6px; justify-content: space-between; }
.bcaret { border: 5px solid transparent; border-top: 6px solid #000; border-bottom: 0; }
.debuglabel { margin-top: 2px; color: #c4c4c4; }
.modes { margin: 4px 0 0 0; width: 342px; height: 64px; border-radius: 4px; background: #3d3d3d; display: flex; align-items: center; padding-left: 8px; font-size: 24.400px; color: #d5d5d5; }
.designer { width: 170px; height: 55px; background: #da810a; border-radius: 2px; display: flex; align-items: center; padding-left: 6px; color: #f0e2cc; }
.designer span { margin-left: 4px; }
.chev { margin: 0 11px 0 4px; }
.graph { margin-left: 6px; }
.main { height: 622px; flex: none; display: flex; }
.left { width: 294px; padding: 6px 7px 0 1px; }
.tab { width: 188px; height: 26px; margin-left: 5px; background: #616161; border-radius: 3px 3px 0 0; display: flex; align-items: center; padding: 0 8px; text-shadow: 1px 2px 1px #000; color: #e2e2e2; }
.tab span { margin-left: 6px; flex: 1; }
.tab .x { color: #3a3a3a; font-size: 14px; text-shadow: none; margin-right: 4px; }
.tab.h { margin-top: 6px; height: 27px; }
.panel { background: #616161; border-radius: 0 2px 2px 2px; }
.search { display: flex; align-items: center; justify-content: space-between; background: #cbcbcb; color: #858585; height: 22px; border-radius: 2px; padding: 0 1px 0 6px; }
.palette { height: 279px; padding: 8px 3px 0; width: 286px; }
.palette .search { width: 271px; margin-left: 5px; }
.plist { display: flex; height: 241px; margin-top: 5px; overflow: hidden; position: relative; z-index: 0; box-shadow: inset 0 5px 6px -3px #111, inset 0 -5px 6px -3px #111; }
.rows { width: 261px; background: #3e3e3e; margin-top: -5px; height: 250px; position: relative; z-index: -1; }
.prow { height: 25px; display: flex; align-items: center; padding-left: 27px; }
.prow span { margin-left: 1px; }
.prow.sel { background: #8a8a8a; color: #000; }
.pcat { height: 24.5px; background: #2e2e2e; display: flex; align-items: center; padding: 1px 0 0 2px; font-weight: 700; letter-spacing: .5px; text-shadow: 1px 1px #000; }
.pcat svg { margin-right: 5px; }
.track { width: 19px; margin-left: auto; position: relative; background: linear-gradient(90deg, transparent 10px, #8c8c8c 10px 11px, transparent 11px); }
.track i { width: 13px; height: 141px; margin: 36px 0 0 3px; background: #d3d3d3; border: 1px solid #444; border-radius: 2px; }
.hier { width: 286px; height: 278px; border: 3px solid #616161; border-top-width: 2px; background: #3e3e3e; padding-top: 8px; }
.hier .search { width: 266px; margin: 0 0 4px 7px; }
.hrow { height: 20px; display: flex; align-items: center; }
.exp { width: 0; height: 0; border-left: 10px solid transparent; border-bottom: 10px solid #c5c5c5; }
.hrow .exp { border-left-width: 9px; border-bottom-width: 9px; }
.root { padding: 2px 0 0 3px; height: 21px; } .root b { margin-left: 5px; color: #e6e6e6; letter-spacing: .5px; }
.root .exp { margin-bottom: 4px; }
.canvas { padding: 0 5px 0 16px; height: 20px; } .canvas .hi { margin: 0 6px 0 4px; } .canvas span { letter-spacing: .15px; }
.txt { background: #8a8a8a; margin: 0 2px 0 2px; padding: 0 3px 0 42px; color: #000; } .txt .hi { margin-right: 4px; }
.viewport { width: 1206px; height: 617px; margin-top: 6px; position: relative; }
.rl text { font-size: 11.2px; fill: #a0a0a0; text-anchor: middle; }
.info text { font-size: 25px; font-weight: 700; fill: #585858; }
.hello { font-size: 57.5px; font-weight: 700; fill: #fff; }
.vtools { position: absolute; left: 622px; top: 26px; width: 575px; display: flex; align-items: center; color: #111; }
.vb { height: 30px; width: 28px; flex: none; margin-right: 2px; background: #adadad; border-radius: 7px; border: 1px solid #888; display: flex; align-items: center; justify-content: center; overflow: hidden; box-shadow: 0 0 2px #000; }
.vb b { line-height: 16px; font-size: 15.2px; }
.vb.on, .cell.on { background: #bb720c; }
.vb.dim { background: #686868; border-color: #555; }
.vb.pair { width: 88px; margin-right: 5px; }
.cell { flex: 1; height: 30px; display: flex; align-items: center; justify-content: center; }
.globe { flex: none; width: 28px; border-right: 1px solid #111; }
.none { flex-direction: column; border-left: 1px solid #111; }
.globe + .none { border-left: 0; }
.none i { border: 3px solid transparent; border-top: 4px solid #111; border-bottom: 0; margin-top: 3px; }
.vb.lock { margin-right: 6px; }
.vb.flow { width: 58px; margin-right: 6px; } .rr b { font-size: 17px; color: #555; }
.vb.gridb { width: 61px; margin-right: 2px; } .gridb .on { flex: none; width: 28px; }
.wide { height: 26px; } .wide i { border: 5px solid transparent; border-top: 7px solid #111; border-bottom: 0; margin-left: 2px; }
.vb.w1 { width: 103px; } .vb.w2 { width: 95px; margin: 0; }
.right { width: 420px; padding-top: 6px; position: relative; }
.details { width: 419px; height: 590px; padding: 3px 3px 2px; overflow: hidden; }
.drow { display: flex; align-items: center; }
.name { height: 22px; padding-left: 3px; }
.nameinput { width: 250px; height: 22px; flex: none; margin: 0 9px 0 6px; background: #dfdfdf; border-radius: 4px; color: #000; padding: 1px 8px; }
.check { width: 18px; height: 18px; background: #ababab; border-radius: 2px; }
.isvar { margin: 0 21px 0 5px; letter-spacing: .15px; } .op { border-bottom: 1px dotted #ddd; margin-top: -1px; }
.srch { margin: 8px 0 2px; height: 30px; padding-left: 5px; }
.srch .search { width: 319px; }
.listbtn { width: 34px; height: 30px; margin: 0 4px 0 11px; border: 1px solid #333; border-radius: 2px; background: linear-gradient(#ddd, #aaa); display: flex; align-items: center; justify-content: center; }
.srch .caret { margin-left: 5px; border-width: 7px 5px 0; }
.dbody { position: relative; height: 520px; overflow: hidden; background: #616161; }
.dhead { height: 27px; background: #2e2e2e; font-weight: 700; display: flex; align-items: center; padding-left: 3px; color: #e2e2e2; text-shadow: 1px 2px 1px #000; border-radius: 4px 4px 0 0; letter-spacing: .38px; }
.dhead .exp { margin: 0 4px 2px 0; }
.dhead.gap { margin-top: 3px; } .dhead.a { height: 26px; }
.dprops { background: linear-gradient(90deg, #3e3e3e 137px, #222 137px 138px, #3e3e3e 138px); border-radius: 0 0 3px 3px; overflow: hidden; }
.slot { padding-bottom: 2px; }
.dp { display: flex; align-items: center; font-size: 13.8px; letter-spacing: .3px; }
.arr { width: 20px; padding-left: 5px; } .arr .exp { margin-left: -1px; }
.dp label { width: 123px; }
.dp.sub label { padding-left: 12px; letter-spacing: .5px; }
.dp.anch { height: 40px; }
.combo { width: 134px; height: 24px; background: linear-gradient(#e0e0e0, #a5a5a5); border: 1px solid #888; border-radius: 2px; display: flex; align-items: center; justify-content: space-between; color: #000; padding: 0 8px 0 6px; }
.combo.big { height: 32px; font-size: 15.6px; letter-spacing: .2px; padding-left: 7px; padding-right: 9px; }
.content { height: 30px; margin-bottom: 17px; }
.r29 { height: 29px; } .r30 { height: 30px; } .r31 { height: 31px; } .r32 { height: 32px; }
.famcombo { width: 158px; height: 24px; background: #5a5a5a; border-radius: 3px; }
.num { width: 131px; height: 22px; background: linear-gradient(90deg, #a8a8a8 16px, #d5d5d5 17px); border-radius: 4px; color: #111; display: flex; align-items: center; justify-content: space-between; padding: 0 7px 0 6px; font-size: 14px; }
.reset { margin-left: 8px; }
.dscroll { position: absolute; right: 0; top: 0; width: 17px; height: 523px; background: linear-gradient(90deg, transparent 8px, #888 8px 9px, transparent 9px); }
.dscroll i { width: 13px; height: 100px; background: #cfcfcf; margin: 1px 0 0 2px; border: 1px solid #444; border-radius: 2px; }
.popup { position: absolute; left: 66px; top: 162px; width: 353px; height: 396px; background: #222; border: 1px solid #4b4b4b; box-shadow: inset 0 0 0 1px #111; }
.agrid { position: absolute; left: 5px; top: 5px; display: grid; grid-template-columns: 85px 85px 87px 84px; grid-template-rows: 86px 86px 87.500px 86px; }
.vline { position: absolute; left: 260px; top: 4px; width: 2px; height: 347px; background: #4f8fc6; }
.hline { position: absolute; left: 5px; top: 263px; width: 342px; height: 1px; background: #4f8fc6; }
.yellow { position: absolute; left: 72px; top: 79px; width: 125px; height: 106px; border: 7px solid #fff600; border-radius: 29px; }
.popup p { position: absolute; left: 8px; top: 354px; margin: 0; line-height: 17px; color: #d6d6d6; letter-spacing: .04px; }
.nosync { position: absolute; left: 318px; top: 361px; }
.bottom { height: 273px; flex: none; display: flex; padding-top: 7px; }
.anim { width: 294px; padding-left: 1px; }
.bottom .tab { height: 27px; }
.apanel { width: 287px; height: 238px; border: 3px solid #616161; background: #3e3e3e; display: flex; padding: 5px; }
.green { width: 101px; height: 25px; background: #4fa452; border: 1px solid #6ab06c; font-weight: 700; color: #fff; display: flex; align-items: center; padding-left: 4px; text-shadow: 1px 2px 1px #000; font-size: 15.3px; }
.green svg { margin-right: 3px; }
.apanel .search { width: 165px; height: 23px; margin: 1px 0 0 3px; }
.timeline { width: 1626px; position: relative; }
.ttabs { display: flex; gap: 2px; }
.ttabs .tab { width: 187px; } .ttabs .tab + .tab { margin-left: 0; }
.tab.off { background: #424242; }
.tpanel { width: 1624px; height: 238px; background: #616161; padding: 3px 2px 2px; }
.ttools { height: 39px; background: #414141; border-radius: 3px 3px 0 0; }
.tbody { display: flex; gap: 5px; height: 193px; }
.tleft { width: 486px; display: flex; flex-direction: column; }
.trow { height: 33px; background: #404040; display: flex; align-items: center; padding-left: 8px; border-radius: 0 0 3px 3px; }
.trackbtn { width: 84px; height: 25px; background: #72886f; border: 1px solid #7d917b; display: flex; align-items: center; gap: 5px; padding-left: 4px; color: #c5cbc5; text-shadow: 1px 1px 1px #111; }
.filter { width: 324px; height: 23px; margin-left: 3px; background: #7e7e7e; color: #5c5c5c; display: flex; align-items: center; justify-content: space-between; padding: 0 1px 0 7px; border-radius: 2px; }
.tzero { margin-left: 12px; color: #a8988e; letter-spacing: .2px; }
.tempty { height: 119px; }
.transport { height: 41px; background: #414141; border-radius: 3px; padding: 8px 0 0 76px; }
.tt { font-size: 13.8px; fill: #696969; }
.tw { font-size: 15.6px; fill: #a8a8a8; }
.noanim { font-size: 29.5px; fill: #e0e0e0; filter: drop-shadow(1px 2px 0 #111); }
.nosync2 { position: absolute; left: 1600px; top: 240px; }
.taskbar { height: 50px; background: linear-gradient(90deg, #0a0a0a, #100908 40%, #0d0708 70%, #0a0808); display: flex; font-family: "Open Sans", "Noto Sans", sans-serif; font-size: 14.4px; color: #fff; }
.clock { width: 92px; display: flex; flex-direction: column; align-items: center; line-height: 23px; padding-top: 2px; letter-spacing: -.2px; }
.notif { margin: 15px 29px 0 12px; }
</style>
